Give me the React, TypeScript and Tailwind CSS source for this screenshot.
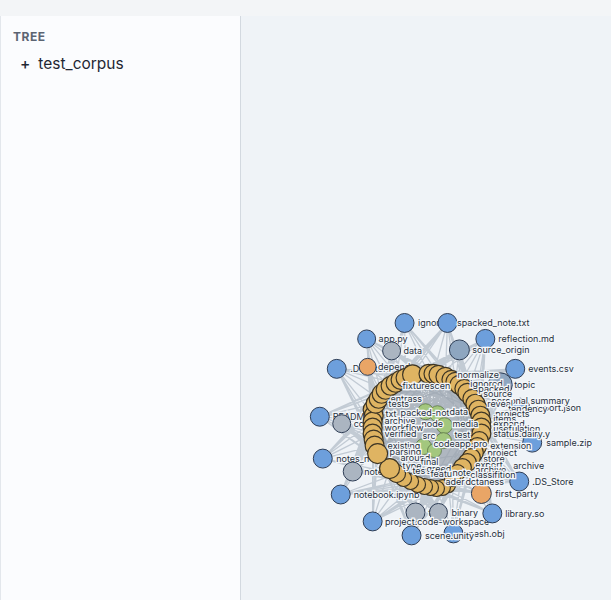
type GraphNode = {
  x: number;
  y: number;
  r: number;
  fill: string;
  label?: string;
  dx?: number;
};

type FloatLabel = {
  x: number;
  y: number;
  text: string;
};

const BLUE = '#6d9fdc';
const SLATE = '#8ea6c0';
const GRAY = '#abb5c1';
const ORANGE = '#e9a566';
const GOLD = '#dfb462';
const GREEN = '#a3c77e';

// files and folders around the outside of the ring
const outerNodes: GraphNode[] = [
  { x: 500, y: 385, r: 12, fill: SLATE, label: 'topic', dx: 2 },
  { x: 520, y: 408, r: 9.5, fill: BLUE, label: 'export.json' },
  { x: 453, y: 534, r: 9.5, fill: BLUE, label: 'mesh.obj', dx: 3 },
  { x: 404, y: 323, r: 9.5, fill: BLUE, label: 'ignored' },
  { x: 447, y: 323, r: 9.5, fill: BLUE, label: 'spacked_note.txt', dx: 0 },
  { x: 485, y: 339, r: 9.5, fill: BLUE, label: 'reflection.md', dx: 3.5 },
  { x: 366, y: 339, r: 9, fill: BLUE, label: 'app.py', dx: 3 },
  { x: 391, y: 351, r: 9, fill: GRAY, label: 'data', dx: 3 },
  { x: 459, y: 350, r: 10, fill: SLATE, label: 'source_origin', dx: 3 },
  { x: 336, y: 369, r: 9.5, fill: BLUE, label: '.DS_Store', dx: 4 },
  { x: 367, y: 367, r: 8.5, fill: ORANGE, label: 'depend', dx: 2 },
  { x: 515, y: 369, r: 9.5, fill: BLUE, label: 'events.csv', dx: 3.5 },
  { x: 319, y: 417, r: 9.5, fill: BLUE, label: 'README', dx: 3.5 },
  { x: 341, y: 424, r: 9, fill: GRAY, label: 'config', dx: 3 },
  { x: 322, y: 459, r: 9.5, fill: BLUE, label: 'notes_n', dx: 4 },
  { x: 352, y: 472, r: 9.5, fill: GRAY, label: 'notes', dx: 2 },
  { x: 340, y: 495, r: 9.5, fill: BLUE, label: 'notebook.ipynb', dx: 3.5 },
  { x: 415, y: 513, r: 9.5, fill: GRAY, label: 'text', dx: 3.5 },
  { x: 438, y: 513, r: 9, fill: GRAY, label: 'binary', dx: 4 },
  { x: 372, y: 522, r: 9.5, fill: BLUE, label: 'project.code-workspace', dx: 3 },
  { x: 411, y: 536, r: 9.5, fill: BLUE, label: 'scene.unity', dx: 4 },
  { x: 492, y: 514, r: 9.5, fill: BLUE, label: 'library.so', dx: 3.5 },
  { x: 481, y: 494, r: 10, fill: ORANGE, label: 'first_party', dx: 4 },
  { x: 519, y: 482, r: 9.5, fill: BLUE, label: '.DS_Store', dx: 3.5 },
  { x: 532, y: 443, r: 9.5, fill: BLUE, label: 'sample.zip', dx: 4.5 },
];

const greenNodes: GraphNode[] = [
  { x: 425, y: 412, r: 8, fill: GREEN },
  { x: 437, y: 414, r: 8, fill: GREEN },
  { x: 444, y: 426, r: 8, fill: GREEN },
  { x: 443, y: 441, r: 8, fill: GREEN },
  { x: 423, y: 447, r: 8, fill: GREEN },
  { x: 434, y: 451, r: 7, fill: GREEN },
];

// listed from the back of the stack to the front
const ringPoints: [number, number, number][] = [
  [448, 486, 7], [442, 488, 8], [436, 489, 8], [430, 488, 8], [424, 487, 8],
  [417, 485, 8], [410, 482, 8], [403, 479, 8], [396, 474, 9], [389, 469, 10],
  [372, 410, 9.5], [373, 416, 9.5], [372, 422, 9.5], [372, 428, 9.5], [372, 434, 9.5],
  [373, 440, 9.5], [374, 446, 9.5], [377, 454, 10],
  [375, 404, 9.5], [378, 399, 9.5], [381, 394, 9.5], [385, 390, 9.5], [390, 386, 9.5],
  [395, 383, 9.5], [400, 380, 9.5], [405, 378, 9.5], [412, 375, 10],
  [428, 374, 9.5], [433, 374, 9.5], [438, 375, 9.5], [445, 377, 9.5],
  [451, 380, 9.5], [455, 382, 9.5],
  [459, 385, 9.5], [464, 389, 9.5], [467, 393, 9.5], [472, 399, 9.5], [475, 404, 9.5],
  [478, 410, 9.5], [480, 416, 9.5], [481, 422, 9.5], [481, 428, 9.5], [481, 434, 9.5],
  [479, 441, 9], [477, 447, 9], [474, 453, 9], [471, 458, 9], [467, 463, 9],
  [462, 468, 9], [457, 473, 8], [452, 479, 8],
];

const ringNodes: GraphNode[] = ringPoints.map(([x, y, r]) => ({ x, y, r, fill: GOLD }));

// labels of the folded nodes inside the ring
const innerLabels: FloatLabel[] = [
  { x: 402, y: 389, text: 'fixturescen' },
  { x: 457, y: 378, text: 'normalize' },
  { x: 470, y: 387, text: 'ignored' },
  { x: 478, y: 392, text: 'packed' },
  { x: 483, y: 397, text: 'source' },
  { x: 491, y: 404, text: 'personal summary' },
  { x: 487, y: 407, text: 'reveal' },
  { x: 508, y: 412, text: 'tendency' },
  { x: 495, y: 417, text: 'projects' },
  { x: 493, y: 422, text: 'items' },
  { x: 493, y: 427, text: 'expand' },
  { x: 493, y: 432, text: 'usefulation' },
  { x: 493, y: 437, text: 'status.dairy.y' },
  { x: 390, y: 402, text: 'entrass' },
  { x: 388, y: 407, text: 'tests' },
  { x: 385, y: 417, text: 'txt' },
  { x: 400, y: 416, text: 'packed-note' },
  { x: 449, y: 415, text: 'data' },
  { x: 384, y: 424, text: 'archive' },
  { x: 421, y: 427, text: 'node' },
  { x: 452, y: 427, text: 'media' },
  { x: 384, y: 431, text: 'workflow' },
  { x: 384, y: 437, text: 'verified' },
  { x: 422, y: 439, text: 'src' },
  { x: 454, y: 438, text: 'test' },
  { x: 433, y: 447, text: 'codeapp.pro' },
  { x: 490, y: 449, text: 'extension' },
  { x: 387, y: 449, text: 'existing' },
  { x: 389, y: 455, text: 'parsing' },
  { x: 487, y: 456, text: 'project' },
  { x: 400, y: 461, text: 'around' },
  { x: 483, y: 462, text: 'store' },
  { x: 420, y: 465, text: 'final' },
  { x: 402, y: 469, text: 'type' },
  { x: 475, y: 468, text: 'export' },
  { x: 513, y: 469, text: 'archive' },
  { x: 475, y: 473, text: 'archive' },
  { x: 412, y: 474, text: 'tests' },
  { x: 426, y: 472, text: 'greed' },
  { x: 430, y: 477, text: 'feature' },
  { x: 452, y: 476, text: 'note' },
  { x: 470, y: 478, text: 'classifition' },
  { x: 445, y: 485, text: 'ader' },
  { x: 465, y: 485, text: 'dctaness' },
];

function buildEdges() {
  const parts: string[] = [];
  outerNodes.forEach((node, i) => {
    ringNodes.forEach((target, j) => {
      const near = Math.hypot(node.x - target.x, node.y - target.y) < 125;
      if (near && (i + j) % 2 === 0) {
        parts.push(`M${node.x} ${node.y}L${target.x} ${target.y}`);
      }
    });
  });
  return parts.join('');
}

function buildInnerEdges() {
  const parts: string[] = [];
  ringNodes.forEach((node, i) => {
    greenNodes.forEach((target) => {
      parts.push(`M${node.x} ${node.y}L${target.x} ${target.y}`);
    });
    const across = ringNodes[(i + 19) % ringNodes.length];
    parts.push(`M${node.x} ${node.y}L${across.x} ${across.y}`);
    parts.push(`M${node.x} ${node.y}L445 458`);
    parts.push(`M${node.x} ${node.y}L432 462`);
  });
  return parts.join('');
}

const labelClass =
  'fill-[#27303c] stroke-[#f4f7fa] stroke-[2.5px] text-[9px] [paint-order:stroke]';

function GraphView() {
  return (
    <svg viewBox="240 16 371 584" className="h-full w-full">
      <path d={buildEdges()} className="fill-none stroke-[#bac3ce] stroke-[1.3px] opacity-85" />
      <path d={buildInnerEdges()} className="fill-none stroke-[#9aa3ae] stroke-[1.2px] opacity-75" />
      {outerNodes.map((node) => (
        <g key={`${node.x}-${node.y}`}>
          <circle cx={node.x} cy={node.y} r={node.r} fill={node.fill} className="stroke-[#2e3d55] stroke-[1px]" />
          <text x={node.x + node.r + (node.dx ?? 4)} y={node.y + 3.5} className={labelClass}>
            {node.label}
          </text>
        </g>
      ))}
      {greenNodes.map((node) => (
        <circle key={`${node.x}-${node.y}`} cx={node.x} cy={node.y} r={node.r} fill={node.fill} className="stroke-[#55703f] stroke-[0.75px]" />
      ))}
      {ringNodes.map((node) => (
        <circle key={`${node.x}-${node.y}`} cx={node.x} cy={node.y} r={node.r} fill={node.fill} className="stroke-[#3d3524] stroke-[1.2px]" />
      ))}
      {innerLabels.map((label) => (
        <text key={`${label.x}-${label.y}`} x={label.x} y={label.y} className={labelClass}>
          {label.text}
        </text>
      ))}
    </svg>
  );
}

export default function App() {
  return (
    <div className="flex h-[600px] w-[611px] flex-col overflow-hidden bg-[#f3f5f7] font-['Inter',sans-serif]">
      <div className="h-4 shrink-0 bg-[#f3f5f7]" />
      <div className="flex min-h-0 flex-1">
        <aside className="w-[241px] shrink-0 border-x border-l-[#e3e7ec] border-r-[#d3d9e0] bg-[#fbfcfe] px-3 py-3.5">
          <h2 className="text-[12px] leading-[14px] font-bold tracking-[0.5px] text-[#5b6472]">TREE</h2>
          <div className="mt-2.5 flex items-center gap-2 pl-[7px] text-[15.5px] leading-5 text-[#1f2733]">
            <span className="font-medium">+</span>
            <span>test_corpus</span>
          </div>
        </aside>
        <main className="min-w-0 flex-1 bg-[#eff3f7]">
          <GraphView />
        </main>
      </div>
    </div>
  );
}
